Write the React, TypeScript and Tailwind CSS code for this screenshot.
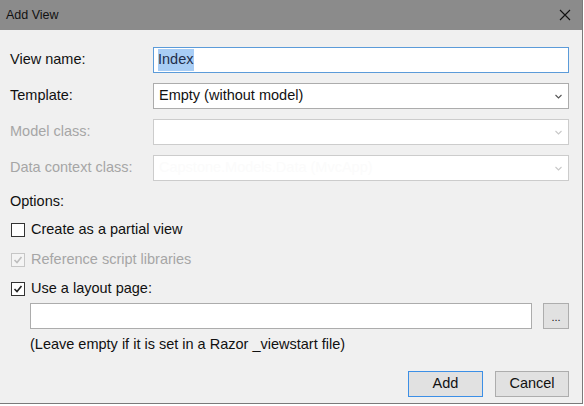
const font = { fontFamily: '"Liberation Sans", Arial, sans-serif' };

function Chevron({ disabled }: { disabled?: boolean }) {
  return (
    <svg width="7" height="5" viewBox="0 0 7 5" className="mr-[6px]">
      <path
        d="M0.5 1 L3.5 4 L6.5 1"
        fill="none"
        stroke={disabled ? '#c8c8c8' : '#555555'}
        strokeWidth="1.1"
      />
    </svg>
  );
}

function Select({ value, disabled, ghost }: { value?: string; disabled?: boolean; ghost?: string }) {
  return (
    <div
      className={`flex h-[26px] flex-1 items-center justify-between border bg-white pl-[5px] ${
        disabled ? 'border-[#cccccc]' : 'border-[#acacac]'
      }`}
    >
      <span className={ghost ? 'text-[#fbfbfb]' : 'text-[#111]'}>{value || ghost}</span>
      <Chevron disabled={disabled} />
    </div>
  );
}

function Checkbox({ checked, disabled }: { checked?: boolean; disabled?: boolean }) {
  return (
    <div
      className={`flex h-[14px] w-[14px] items-center justify-center border ${
        disabled ? 'border-[#c6c6c6] bg-[#f4f4f4]' : 'border-[#333333] bg-white'
      }`}
    >
      {checked && (
        <svg width="10" height="10" viewBox="0 0 10 10">
          <path
            d="M1.5 5 L4 7.5 L8.5 2"
            fill="none"
            stroke={disabled ? '#bdbdbd' : '#222222'}
            strokeWidth="1.6"
          />
        </svg>
      )}
    </div>
  );
}

export default function App() {
  return (
    <div className="h-[406px] w-[584px] bg-white text-[14.5px]" style={font}>
      <div className="flex h-[404px] w-[583px] flex-col border-b border-r border-[#7a7a7a] bg-[#f0f0f0]">
        {/* Title bar */}
        <div className="flex h-[30px] items-center justify-between bg-[#8b8b8b] pl-[6px] pr-[11px]">
          <span className="text-[12.5px] text-[#111]">Add View</span>
          <svg width="12" height="12" viewBox="0 0 12 12">
            <path d="M1 1 L11 11 M11 1 L1 11" stroke="#111" strokeWidth="1.1" />
          </svg>
        </div>

        <div className="flex flex-1 flex-col pl-[10px] pr-[13px] pt-[17px]">
          {/* Fields */}
          <div className="flex flex-col gap-[10px]">
            <div className="flex items-center">
              <label className="w-[143px] text-[#111]">View name:</label>
              <div className="flex h-[26px] flex-1 items-center border border-[#5b9bd9] bg-white pl-[4px]">
                <span className="bg-[#a8cdf5] pr-[1px] text-[#1f2d4a]">Index</span>
              </div>
            </div>
            <div className="flex items-center">
              <label className="w-[143px] text-[#111]">Template:</label>
              <Select value="Empty (without model)" />
            </div>
            <div className="flex items-center">
              <label className="w-[143px] text-[#a6a6a6]">Model class:</label>
              <Select disabled />
            </div>
            <div className="flex items-center">
              <label className="w-[143px] text-[#a6a6a6]">Data context class:</label>
              <Select disabled ghost="Capstone.Models.Data (MvcApp)" />
            </div>
          </div>

          {/* Options */}
          <div className="mt-[11px] flex h-[20px] items-center text-[#111]">Options:</div>

          <div className="mt-[8px] flex h-[20px] items-center gap-[6px] pl-[1px]">
            <Checkbox />
            <span className="text-[#111]">Create as a partial view</span>
          </div>
          <div className="mt-[10px] flex h-[20px] items-center gap-[6px] pl-[1px]">
            <Checkbox checked disabled />
            <span className="text-[#a6a6a6]">Reference script libraries</span>
          </div>
          <div className="mt-[9px] flex h-[20px] items-center gap-[6px] pl-[1px]">
            <Checkbox checked />
            <span className="text-[#111]">Use a layout page:</span>
          </div>

          <div className="mt-[4px] flex items-center gap-[11px] pl-[20px]">
            <div className="h-[26px] flex-1 border border-[#acacac] bg-white" />
            <button className="flex h-[26px] w-[26px] items-end justify-center border border-[#adadad] bg-[#e1e1e1] pb-[5px] text-[11px] leading-none text-[#111]">
              ...
            </button>
          </div>

          <div className="mt-[6px] flex h-[20px] items-center pl-[20px] text-[#111]">
            (Leave empty if it is set in a Razor _viewstart file)
          </div>

          <div className="mt-[16px] flex justify-end gap-[12px]">
            <button className="h-[26px] w-[75px] border border-[#3c8fe6] bg-[#e1e1e1] text-[#111]">Add</button>
            <button className="h-[26px] w-[74px] border border-[#adadad] bg-[#e1e1e1] text-[#111]">Cancel</button>
          </div>
        </div>
      </div>
    </div>
  );
}
